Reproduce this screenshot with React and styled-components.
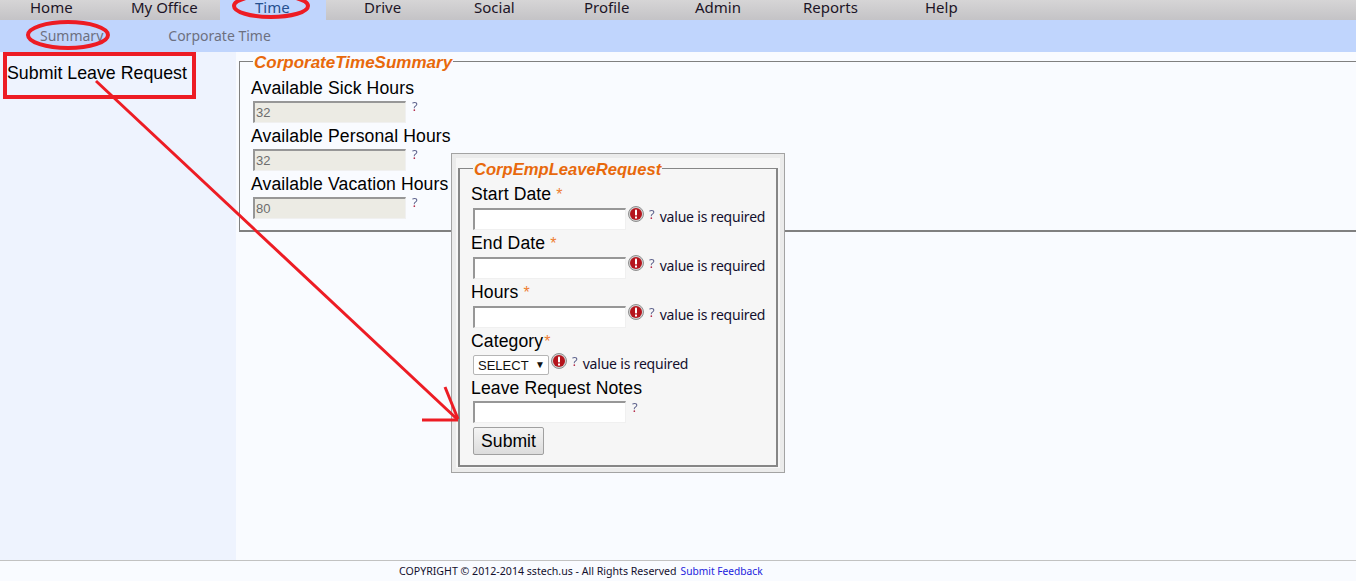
import React from "react";
import styled, { createGlobalStyle } from "styled-components";

const Global = createGlobalStyle`
  html, body { margin: 0; padding: 0; height: 100%; background: #fff; overflow: hidden; }
  body { font-family: "Liberation Sans", Arial, sans-serif; }
  #root { height: 100%; }
`;
const Page = styled.div`
  position: relative; height: 581px; display: flex; flex-direction: column; width: 1356px; overflow: hidden; background: #f9fbff;
`;
const Nav = styled.nav`
  height: 20px; flex: none; display: flex; overflow: hidden;
  background: linear-gradient(#d6d5d6, #c4c3c6);
`;
const NavItem = styled.a`
  width: ${p => p.$w}px; flex: none; box-sizing: border-box; padding-left: ${p => p.$pl}px; white-space: nowrap;
  font: 15px/15px "Noto Sans", Tahoma, sans-serif; color: ${p => p.$active ? "#26508f" : "#1c1426"};
  background: ${p => p.$active ? "#c0d5fd" : "transparent"};
`;
const SubNav = styled.div`
  height: 32px; flex: none; background: #c0d5fd; display: flex; align-items: center; padding-bottom: 2px; box-sizing: border-box;
`;
const SubItem = styled.a`
  font: 14px "Noto Sans", Tahoma, sans-serif; color: #6d7080;
  margin-left: ${p => p.$ml}px;
`;
const Body = styled.div`
  flex: 1; display: flex; min-height: 0;
`;
const Side = styled.aside`
  width: 236px; flex: none; background: #eef3fe; padding: 11px 0 0 7px; box-sizing: border-box;
  font-size: 17.8px; line-height: 20px; color: #000; white-space: nowrap;
`;
const Main = styled.main`
  flex: 1; padding: 0 0 0 3px; min-width: 0;
`;
const Field = styled.fieldset`
  margin: ${p => p.$margin || 0}; padding: ${p => p.$pad}; border: 1px solid #808080;
  border-bottom-width: 2px; box-sizing: border-box; min-inline-size: 0;
`;
const Legend = styled.legend`
  padding: 2px 1px 0; font: italic bold ${p => p.$size}px/19px "Liberation Sans", Arial, sans-serif; color: #e8690c; margin-left: ${p => p.$ml}px;
`;
const Label = styled.div`
  font-size: 17.6px; line-height: 20px; color: #000; height: 20px; white-space: nowrap; letter-spacing: 0.1px;
`;
const Star = styled.span`
  color: #ee7d31; font-size: 16px; margin-left: ${p => p.$ml ?? 5}px;
`;
const Row = styled.div`
  display: flex; align-items: flex-start; height: ${p => p.$h || 29}px; padding: ${p => p.$pt ?? 4}px 0 0 2px; box-sizing: border-box; white-space: nowrap;
`;
const Input = styled.input`
  width: 153px; height: 22px; box-sizing: border-box; margin: 0; padding: 0 1px 1px; flex: none;
  border: 2px solid #f0f0f0; border-top-color: #979797; border-left-color: #979797; border-right-width: 1px; border-bottom-width: 1px;
  background: ${p => p.disabled ? "#ecebe4" : "#fff"}; color: #6d6d6d; font: 13px "Liberation Sans", Arial, sans-serif;
`;
const Help = styled.span`
  font: 13px/14px "Noto Sans", Tahoma, sans-serif; margin: ${p => p.$mt ?? -1}px 0 0 ${p => p.$ml ?? 6}px;
  background: linear-gradient(#5a5f8a 72%, #b02040 72%); -webkit-background-clip: text; background-clip: text; color: transparent;
`;
const Err = styled.span`
  margin: -2px 0 0 2px; display: block; width: 16px; height: 16px; flex: none;
`;
const Msg = styled.span`
  font: 14px/18px "Noto Sans", Tahoma, sans-serif; color: #14102e; margin: 0 0 0 5px; letter-spacing: -0.2px;
`;
const SummaryBody = styled.div`
  height: 152px;
`;
const Dialog = styled.div`
  position: absolute; left: 451px; top: 153px; width: 334px; height: 320px; box-sizing: border-box;
  border: 1px solid #a3a3a3; background: #f6f6f6; padding: 4px 6px 5px 6px;
  box-shadow: inset 0 0 0 4px #ebebeb;
  display: flex;
`;
const DialogField = styled(Field)`
  flex: 1; height: 100%; border-width: 2px; border-color: #868686; border-top-width: 1px;
`;
const Select = styled.div`
  width: 76px; height: 20px; box-sizing: border-box; border: 1px solid #b5b5b5; background: #fff; border-radius: 2px; flex: none;
  font: 13px/20px "Liberation Sans", Arial, sans-serif; color: #111; padding-left: 4px; display: flex; justify-content: space-between;
`;
const Caret = styled.span`
  font-size: 10px; line-height: 18px; margin-right: 3px; color: #111;
`;
const Submit = styled.button`
  margin: 0 0 0 2px; width: 71px; height: 28px; box-sizing: border-box; border: 1px solid #a0a0a0; border-radius: 2px; display: block;
  background: linear-gradient(#f4f4f4, #dcdcdc); font: 17.6px "Liberation Sans", Arial, sans-serif; color: #000; padding: 0;
`;
const Footer = styled.footer`
  height: 21px; flex: none; border-top: 1px solid #c2c2c2; box-sizing: border-box; background: #f9fbff;
  font: 10.6px/21px "Noto Sans", Tahoma, sans-serif; color: #14102e; padding-left: 399px; white-space: nowrap;
`;
const FeedLink = styled.a`
  color: #2222dd; margin-left: 4px; font-size: 10.2px;
`;
const Overlay = styled.svg`
  position: absolute; left: 0; top: 0; pointer-events: none;
`;

const ErrIcon = () => (
  <Err>
    <svg width="16" height="16" viewBox="0 0 16 16">
      <circle cx="8" cy="8" r="7.5" fill="#d2d2d2" stroke="#8f8f8f" />
      <circle cx="8" cy="8" r="6" fill="#b5141c" />
      <rect x="7" y="3.5" width="2" height="6" rx="0.8" fill="#fff" />
      <rect x="7" y="10.5" width="2" height="2" fill="#fff" />
    </svg>
  </Err>
);

const SummaryRow = ({ label, value }) => (
  <>
    <Label>{label}</Label>
    <Row $h={28} $pt={3}>
      <Input disabled value={value} readOnly />
      <Help $mt={-2}>?</Help>
    </Row>
  </>
);

const ReqRow = ({ label, starMl }) => (
  <>
    <Label>{label}<Star $ml={starMl}>*</Star></Label>
    <Row $pt={4}>
      <Input />
      <ErrIcon />
      <Help $ml={5}>?</Help>
      <Msg>value is required</Msg>
    </Row>
  </>
);

export default function App() {
  const nav = [["Home", 104, 30], ["My Office", 116, 27], ["Time", 106, 35], ["Drive", 112, 38], ["Social", 110, 36], ["Profile", 110, 36], ["Admin", 110, 37], ["Reports", 112, 35], ["Help", 100, 45]];
  return (
    <Page>
      <Global />
      <Nav>
        {nav.map(([t, w, pl]) => <NavItem key={t} $w={w} $pl={pl} $active={t === "Time"}>{t}</NavItem>)}
      </Nav>
      <SubNav>
        <SubItem $ml={40}>Summary</SubItem>
        <SubItem $ml={65}>Corporate Time</SubItem>
      </SubNav>
      <Body>
        <Side>Submit Leave Request</Side>
        <Main>
          <Field $pad="6px 0 0 11px" $margin="-1px -6px 0 0">
            <Legend $size={17} $ml={2}>CorporateTimeSummary</Legend>
            <SummaryBody>
              <SummaryRow label="Available Sick Hours" value="32" />
              <SummaryRow label="Available Personal Hours" value="32" />
              <SummaryRow label="Available Vacation Hours" value="80" />
            </SummaryBody>
          </Field>
        </Main>
      </Body>
      <Footer>COPYRIGHT © 2012-2014 sstech.us - All Rights Reserved<FeedLink>Submit Feedback</FeedLink></Footer>
      <Dialog>
        <DialogField $pad="5px 0 0 11px">
          <Legend $size={16.6} $ml={2}>CorpEmpLeaveRequest</Legend>
          <ReqRow label="Start Date" />
          <ReqRow label="End Date" />
          <ReqRow label="Hours" />
          <Label>Category<Star $ml={1}>*</Star></Label>
          <Row $h={27} $pt={4}>
            <Select>SELECT<Caret>▼</Caret></Select>
            <ErrIcon />
            <Help $ml={5}>?</Help>
            <Msg>value is required</Msg>
          </Row>
          <Label>Leave Request Notes</Label>
          <Row $pt={3} $h={29}>
            <Input />
            <Help>?</Help>
          </Row>
          <Submit>Submit</Submit>
        </DialogField>
      </Dialog>
      <Overlay width="1356" height="581" viewBox="0 0 1356 581">
        <g fill="none" stroke="#ed1c24" strokeWidth="4">
          <ellipse cx="271" cy="6" rx="37" ry="11" />
          <ellipse cx="68" cy="35" rx="40" ry="13" />
          <rect x="5" y="54" width="189" height="43" strokeWidth="4" />
          <path d="M96 81 L457 419" strokeWidth="3" />
          <path d="M422 420 L458 420" strokeWidth="3" />
          <path d="M445 387 L458 419" strokeWidth="3" />
        </g>
      </Overlay>
    </Page>
  );
}
